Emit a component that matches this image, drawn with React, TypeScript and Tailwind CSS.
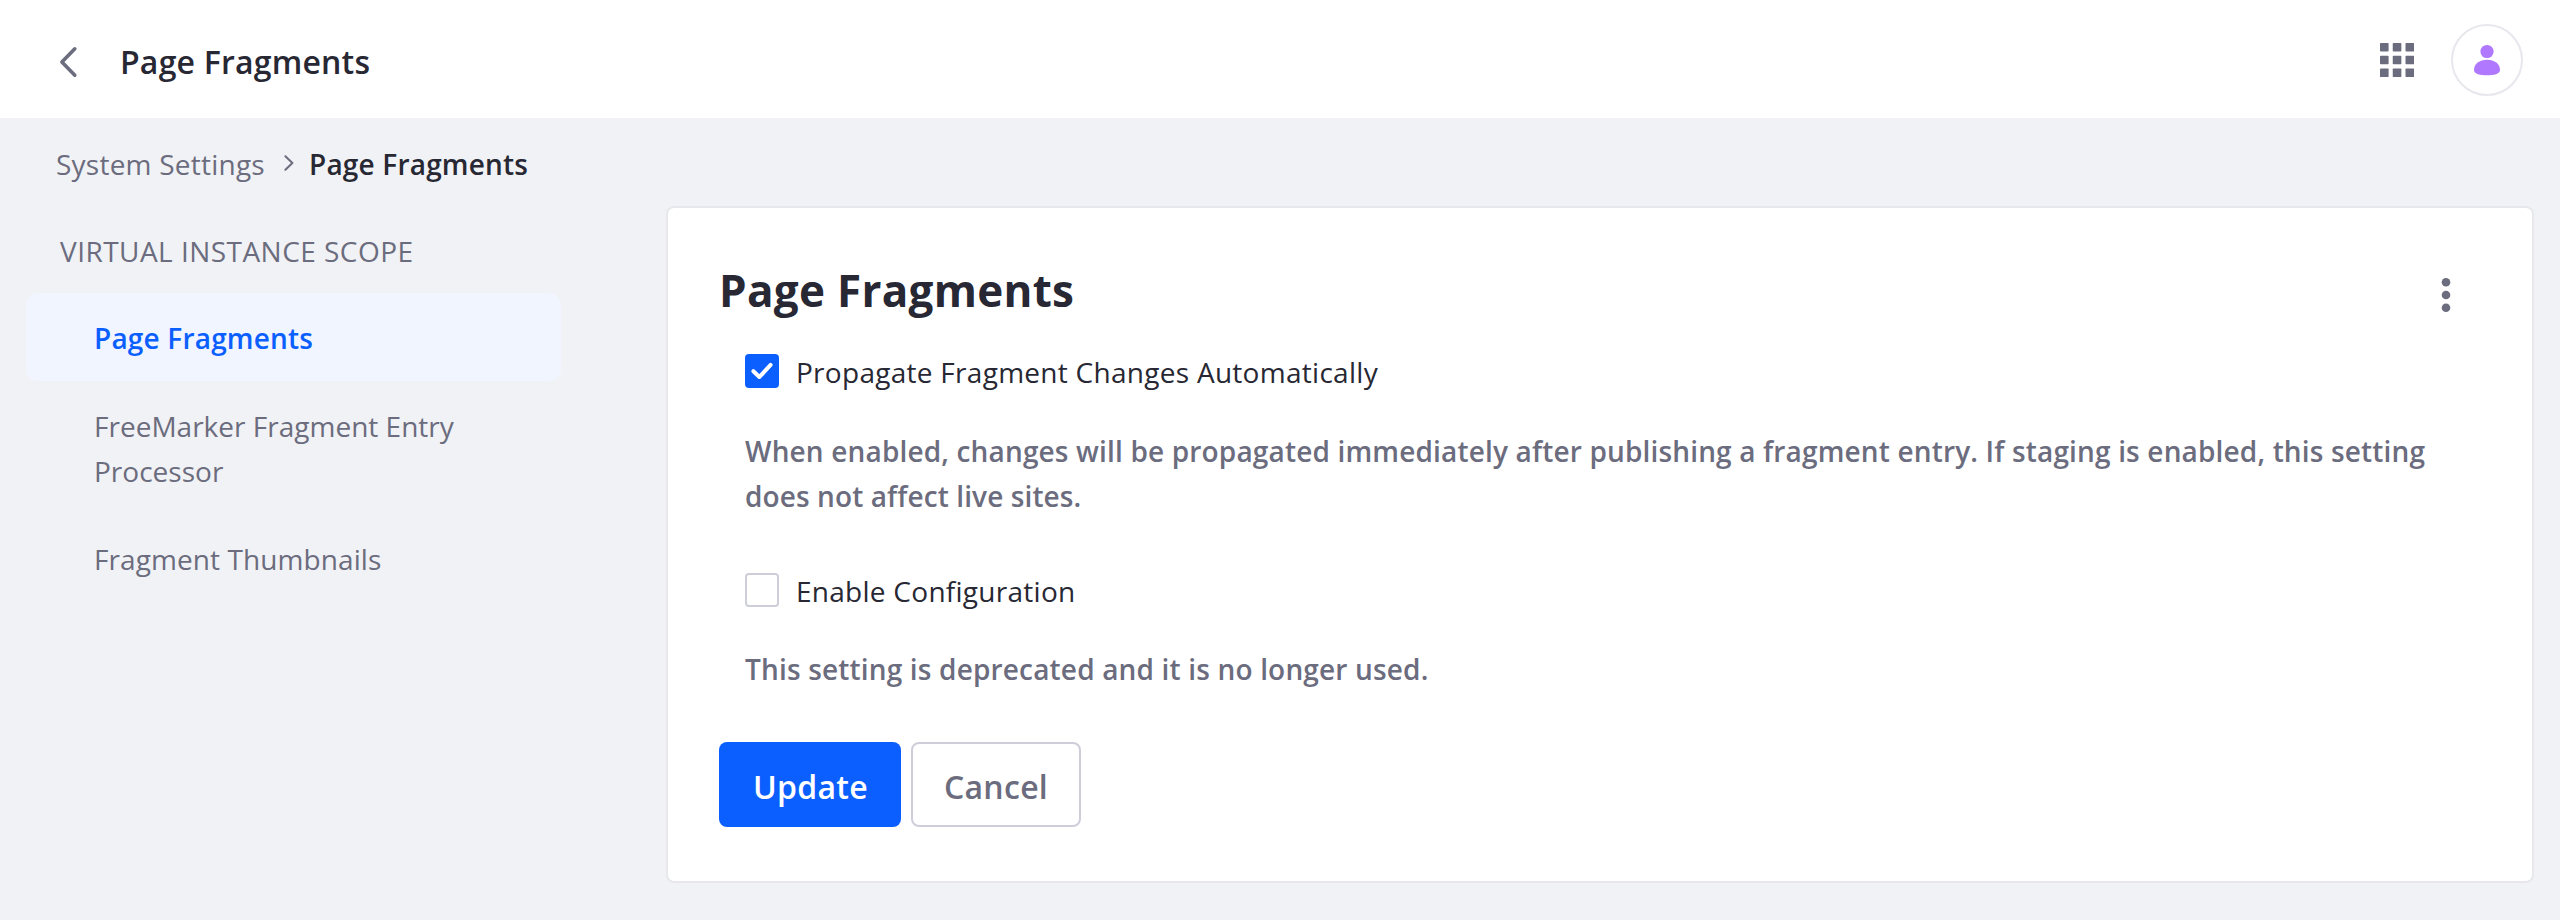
import type { ReactNode } from "react";

const scopeItems = [
  { label: "Page Fragments", active: true, tracking: "tracking-[0.19px]" },
  { label: "FreeMarker Fragment Entry Processor", active: false, tracking: "tracking-[0.01px]" },
  { label: "Fragment Thumbnails", active: false, tracking: "tracking-[0.09px]" },
];

function BackIcon() {
  return (
    <svg className="h-[34px] w-[34px]" viewBox="0 0 34 34" fill="none" stroke="#6b6c7e" strokeWidth="3.6" strokeLinecap="round" strokeLinejoin="round">
      <path d="M23.8 3.8 L10.9 17 L23.8 30.2" />
    </svg>
  );
}

function CrumbIcon() {
  return (
    <svg className="h-4 w-2.5" viewBox="0 0 10 16" fill="none" stroke="#6b6c7e" strokeWidth="2" strokeLinecap="round" strokeLinejoin="round">
      <path d="M1.4 1.2 L8.4 8 L1.4 14.8" />
    </svg>
  );
}

function GridIcon() {
  const steps = [0, 12.75, 25.5];
  return (
    <svg className="h-[34px] w-[34px]" viewBox="0 0 34 34" fill="#6b6c7e">
      {steps.map((y) => steps.map((x) => <rect key={`${x}-${y}`} x={x} y={y} width="8.6" height="8.6" rx="0.8" />))}
    </svg>
  );
}

function UserIcon() {
  return (
    <svg className="h-[32px] w-[26px]" viewBox="0 0 26 32" fill="#af78ff">
      <circle cx="13" cy="7.5" r="6.6" />
      <path d="M13 15.8 C20.5 15.8 26 20 26 26 C26 30.2 19.5 31.2 13 31.2 C6.5 31.2 0 30.2 0 26 C0 20 5.5 15.8 13 15.8 Z" />
    </svg>
  );
}

function DotsIcon() {
  return (
    <svg className="h-[34px] w-[34px]" viewBox="0 0 34 34" fill="#6b6c7e">
      <circle cx="17" cy="4.3" r="4.3" />
      <circle cx="17" cy="17" r="4.3" />
      <circle cx="17" cy="29.7" r="4.3" />
    </svg>
  );
}

function Checkbox({ checked, children }: { checked: boolean; children: ReactNode }) {
  return (
    <label className="flex items-start gap-[17px]">
      <span
        className={
          checked
            ? "mt-1 flex size-[34px] items-center justify-center rounded-[4px] bg-[#0b5fff]"
            : "mt-1 size-[34px] rounded-[4px] border-2 border-[#cdced9] bg-white"
        }
      >
        {checked && (
          <svg className="size-[34px]" viewBox="0 0 34 34" fill="none" stroke="#fff" strokeWidth="4" strokeLinecap="round" strokeLinejoin="round">
            <path d="M8.4 17.2 L14.4 23 L25.6 10.9" />
          </svg>
        )}
      </span>
      {children}
    </label>
  );
}

export default function App() {
  return (
    <div className="h-[920px] w-[2560px] bg-[#f1f2f5] font-['Open_Sans',sans-serif] text-[28px] leading-[44px] text-[#272833]">
      <header className="flex h-[118px] justify-between bg-white pr-[37px] pl-[51px]">
        <div className="flex">
          <div className="pt-[45px]">
            <BackIcon />
          </div>
          <h1 className="pt-10 pl-[35px] text-[32px] font-semibold tracking-[0.2px]">Page Fragments</h1>
        </div>
        <div className="flex items-center gap-[37px] pt-0.5">
          <GridIcon />
          <div className="flex size-[72px] items-center justify-center rounded-full border-2 border-[#e7e7ed] bg-white">
            <UserIcon />
          </div>
        </div>
      </header>

      <nav className="flex items-start pt-6 pb-5 pl-14">
        <span className="w-[228px] tracking-[0.23px] text-[#6b6c7e]">System Settings</span>
        <span className="w-[25px] pt-[13px]">
          <CrumbIcon />
        </span>
        <span className="font-semibold tracking-[0.19px]">Page Fragments</span>
      </nav>

      <div className="flex items-start gap-[105px] pl-[26px]">
        <aside className="w-[535px] pt-[23px]">
          <h2 className="mb-5 pl-[34px] tracking-[0.46px] text-[#6b6c7e]">VIRTUAL INSTANCE SCOPE</h2>
          <ul>
            {scopeItems.map((item) => (
              <li
                key={item.label}
                className={`${item.tracking} rounded-xl pt-[23px] pr-16 pb-5 pl-[68px] leading-[45px] ${
                  item.active ? "bg-[#f0f5ff] font-semibold text-[#0b5fff]" : "text-[#6b6c7e]"
                }`}
              >
                {item.label}
              </li>
            ))}
          </ul>
        </aside>

        <main className="h-[677px] w-[1868px] rounded-lg border-2 border-[#e7e7ed] bg-white px-[51px] pt-[52px]">
          <div className="flex items-start justify-between">
            <h2 className="text-[44px] leading-[60px] font-bold tracking-[0.29px]">Page Fragments</h2>
            <div className="mt-[18px] mr-[18px] h-[34px]">
              <DotsIcon />
            </div>
          </div>
          <div className="mt-[30px] pl-[26px]">
            <Checkbox checked>
              <span className="tracking-[0.28px]">Propagate Fragment Changes Automatically</span>
            </Checkbox>
            <p className="mt-[35px] w-[1710px] leading-[45px] font-semibold tracking-[0.16px] text-[#6b6c7e]">
              When enabled, changes will be propagated immediately after publishing a fragment entry. If staging is enabled, this setting{" "}
              <span className="tracking-[0.1px]">does not affect live sites.</span>
            </p>
            <div className="mt-[50px]">
              <Checkbox checked={false}>
                <span className="tracking-[0.27px]">Enable Configuration</span>
              </Checkbox>
            </div>
            <p className="mt-[34px] leading-[45px] font-semibold tracking-[0.17px] text-[#6b6c7e]">
              This setting is deprecated and it is no longer used.
            </p>
          </div>
          <div className="mt-[50px] flex gap-2.5 text-[32px] font-semibold tracking-[0.3px]">
            <button className="h-[85px] w-[182px] rounded-lg bg-[#0b5fff] pt-1 pl-px text-white">Update</button>
            <button className="h-[85px] w-[170px] rounded-lg border-2 border-[#cdced9] bg-white pt-1 text-[#6b6c7e]">Cancel</button>
          </div>
        </main>
      </div>
    </div>
  );
}
